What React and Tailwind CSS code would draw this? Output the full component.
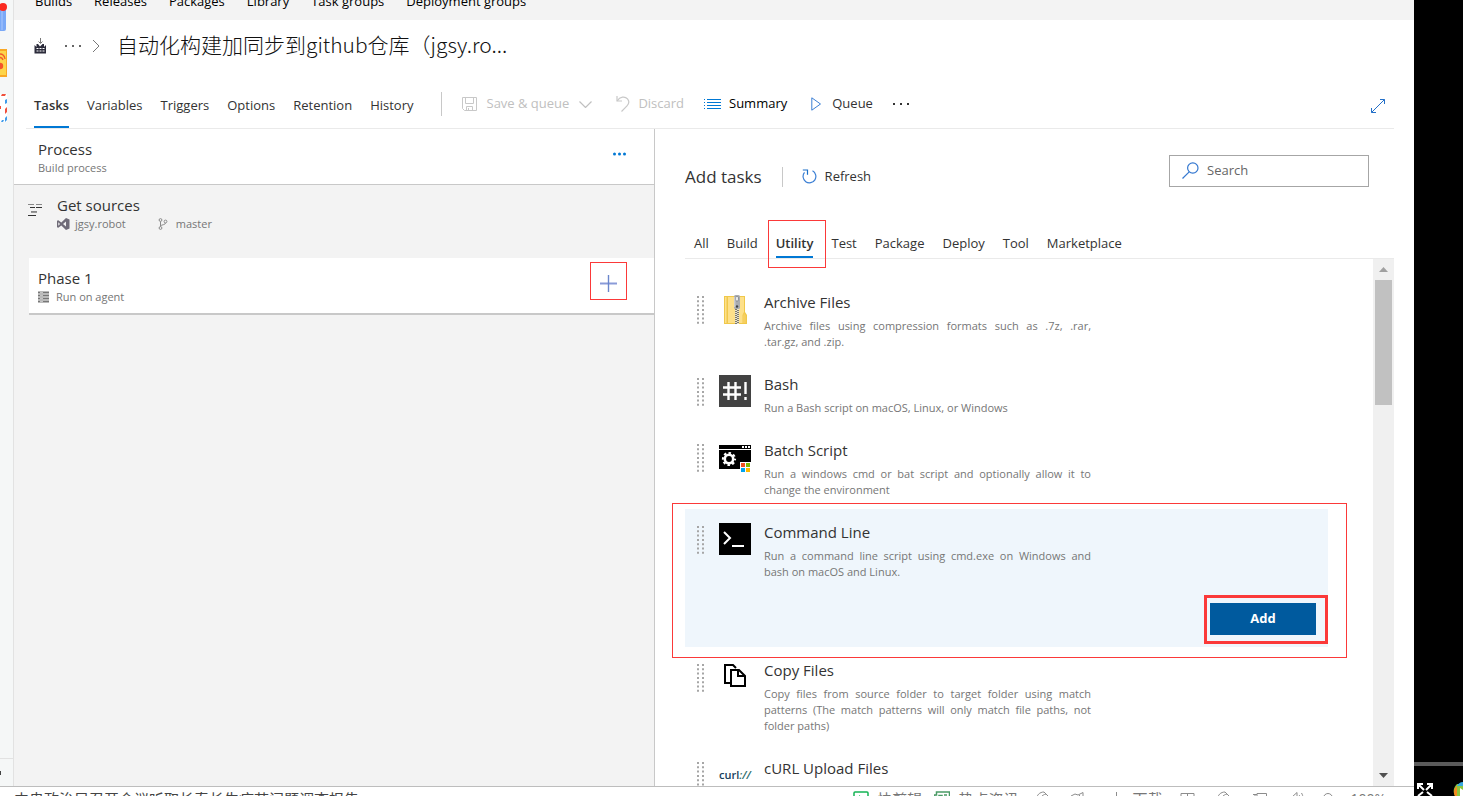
import React from "react";

const NAV = ["Builds", "Releases", "Packages", "Library", "Task groups", "Deployment groups"];
const TABS = ["Tasks", "Variables", "Triggers", "Options", "Retention", "History"];
const CATEGORIES = ["All", "Build", "Utility", "Test", "Package", "Deploy", "Tool", "Marketplace"];

function FactoryIcon() {
  return (
    <svg width="13" height="16" viewBox="0 0 13 16" fill="none">
      <path d="M6.500 0v5M4.500 3.500l2 2 2-2" stroke="#777" />
      <path d="M.5 15.500V7l2 2V6h1.500l2 2.500L8.500 6H10v3l2-2v8.500z" fill="#2b2b3b" />
      <path d="M2.500 10.500h2M5.500 10.500h2M8.500 10.500h2M2.500 13h2M5.500 13h2M8.500 13h2" stroke="#fff" />
    </svg>
  );
}

function Dots({ className }) {
  return (
    <svg width="17" height="4" viewBox="0 0 17 4" className={className} fill="currentColor">
      <rect x="0" y="1" width="2" height="2" />
      <rect x="7" y="1" width="2" height="2" />
      <rect x="14" y="1" width="2" height="2" />
    </svg>
  );
}

function SaveIcon() {
  return (
    <svg width="15" height="14" viewBox="0 0 15 14" fill="none" stroke="#c8c8c8">
      <path d="M.5.5h14v13H2.500l-2-2z" />
      <path d="M3.500.5v6h8v-6M4.500 13.500v-4h6v4M6.500 11v2.500" />
    </svg>
  );
}

function UndoIcon() {
  return (
    <svg width="14" height="16" viewBox="0 0 14 16" fill="none" stroke="#c8c8c8" strokeWidth="1.200">
      <path d="M1 0v5h5" />
      <path d="M1.200 4.800C4 .5 9 0 11.500 2.800c2 2.400 1.400 5-.5 7L5.500 15.500" />
    </svg>
  );
}

function SummaryIcon() {
  return (
    <svg width="17" height="12" viewBox="0 0 17 12" stroke="#0078d4">
      <path d="M3 1.500h14M3 4.500h14M3 7.500h14M3 10.500h14" />
      <path d="M0 1.500h1M0 4.500h1M0 7.500h1M0 10.500h1" />
    </svg>
  );
}

function PlayIcon() {
  return (
    <svg width="11" height="14" viewBox="0 0 11 14" fill="none" stroke="#3b7fd4">
      <path d="M.8.8v12.400L9.500 7z" />
    </svg>
  );
}

function ExpandIcon() {
  return (
    <svg width="16" height="16" viewBox="0 0 16 16" fill="none" stroke="#2470c8">
      <path d="M1.500 14.500l13-13M10 1.500h4.500V6M1.500 10v4.500H6" />
    </svg>
  );
}

function SourcesIcon() {
  return (
    <svg width="15" height="12" viewBox="0 0 15 12">
      <path d="M0 .5h6M8 .5h6M3 7.500h6" stroke="#888" />
      <path d="M2 3.500h5M8 3.500h6M0 11.500h8" stroke="#333" />
      <path d="M3 8.500h6" stroke="#999" />
    </svg>
  );
}

function VsIcon() {
  return (
    <svg width="13" height="12" viewBox="0 0 13 12" fill="#6f6b78" fillRule="evenodd">
      <path d="M9 0l3.500 1.400v9L9 12 4.300 7.500 1.300 9.800 0 9.200V2.800l1.300-.6 3 2.400zM9 3.400L6 6l3 2.600zM1.300 4.200v3.600L3 6z" />
    </svg>
  );
}

function BranchIcon() {
  return (
    <svg width="10" height="12" viewBox="0 0 10 12" fill="none" stroke="#8a8a8a">
      <circle cx="2.500" cy="2" r="1.400" />
      <circle cx="7.500" cy="3.500" r="1.400" />
      <circle cx="2.500" cy="10" r="1.400" />
      <path d="M2.500 3.500v5M7.500 5c0 2-4 1.500-5 3" />
    </svg>
  );
}

function ServerIcon() {
  return (
    <svg width="11" height="12" viewBox="0 0 11 12">
      <path d="M0 1.500h11M0 4.500h11M0 7.500h11M0 10.500h11" stroke="#777" strokeWidth="2" />
      <path d="M2 1.500h3M2 4.500h3M2 7.500h3M2 10.500h3" stroke="#c4c4c4" />
    </svg>
  );
}

function RefreshIcon() {
  return (
    <svg width="15" height="15" viewBox="0 0 15 15" fill="none" stroke="#3b7fd4" strokeWidth="1.200">
      <path d="M10.500 1.800A6.400 6.400 0 1 1 2.500 3.400" />
      <path d="M.8 1h4.700v4.700" stroke="#1a6fc8" />
    </svg>
  );
}

function SearchIcon() {
  return (
    <svg width="17" height="17" viewBox="0 0 17 17" fill="none" stroke="#3478d0" strokeWidth="1.200" className="shrink-0">
      <circle cx="10.800" cy="6" r="5.200" />
      <path d="M7.200 9.800L.5 16.500" />
    </svg>
  );
}

function Grip() {
  return (
    <svg width="7" height="28" viewBox="0 0 7 28" className="mt-[3px] shrink-0" stroke="#a6a6a6" strokeWidth="2">
      <path d="M1 0v28M6 0v28" strokeDasharray="2 2.300" />
    </svg>
  );
}

function ArchiveIcon() {
  return (
    <svg width="32" height="32" viewBox="0 0 32 32">
      <path d="M5 3h21v16l2 3v9H5z" fill="#f0c84a" />
      <path d="M6 4h1.500v26H6zM9 4h16v15l-1.500 3v8H9z" fill="#fde08a" />
      <path d="M25 20l1.800 2.500V30H24v-7.500z" fill="#f6cf60" />
      <rect x="16" y="14" width="4" height="17" fill="#e9e3c8" />
      <path d="M17 14v17M19 15v16" stroke="#555" strokeWidth="1.500" strokeDasharray="1 1" />
      <rect x="15" y="2" width="6" height="14" rx="1.500" fill="#a9acb0" />
      <rect x="16.500" y="3.500" width="3" height="4.500" rx="1.200" fill="#e6e8ea" stroke="#73777b" strokeWidth=".7" />
      <circle cx="18" cy="13.500" r="1.200" fill="#3e4144" />
      <path d="M15.800 4v10" stroke="#d9dbdd" />
    </svg>
  );
}

function BashIcon() {
  return (
    <svg width="32" height="32" viewBox="0 0 32 32" stroke="#fff" strokeWidth="2.400">
      <rect width="32" height="32" fill="#424242" stroke="none" />
      <path d="M9.500 7v18M16.500 7v18M4 12.500h18M4 19.500h18" />
      <path d="M26.500 7v12M26.500 22v3" />
    </svg>
  );
}

function BatchIcon() {
  return (
    <svg width="32" height="32" viewBox="0 0 32 32">
      <path d="M0 4h32v4H0zM0 9h32v19H0z" fill="#000" />
      <path d="M23 5h2v2h-2zM26 5h2v2h-2zM29 5h2v2h-2z" fill="#fff" />
      <circle cx="10" cy="18" r="4.200" fill="none" stroke="#fff" strokeWidth="2.600" />
      <circle cx="10" cy="18" r="6.100" fill="none" stroke="#fff" strokeWidth="2" strokeDasharray="2.500 2.291" strokeDashoffset="1.200" />
      <rect x="21" y="21" width="11" height="11" fill="#fff" />
      <rect x="22" y="22" width="4" height="4" fill="#f25022" />
      <rect x="27" y="22" width="4" height="4" fill="#7fba00" />
      <rect x="22" y="27" width="4" height="4" fill="#00a4ef" />
      <rect x="27" y="27" width="4" height="4" fill="#ffb900" />
    </svg>
  );
}

function CmdIcon() {
  return (
    <svg width="32" height="32" viewBox="0 0 32 32" fill="none" stroke="#fff" strokeWidth="2">
      <rect width="32" height="32" fill="#000" stroke="none" />
      <path d="M5 9l6 6-6 6M13 23h12" />
    </svg>
  );
}

function CopyIcon() {
  return (
    <svg width="32" height="32" viewBox="0 0 32 32" fill="none" stroke="#000" strokeWidth="2">
      <path d="M12 22H6V4h8l3 3" />
      <path d="M12 9h8l6 6v10H12z" fill="#fff" />
      <path d="M19 9v6h7" />
    </svg>
  );
}

function CurlIcon() {
  return (
    <span className="flex h-8 w-8 items-center text-[11px] font-semibold text-[#17405c]">
      curl<span className="text-[#2e6d6b] italic">://</span>
    </span>
  );
}

const TASKS = [
  {
    name: "Archive Files",
    Icon: ArchiveIcon,
    text: "Archive files using compression formats such as .7z, .rar, .tar.gz,\u00a0and .zip.",
  },
  { name: "Bash", Icon: BashIcon, text: "Run a Bash script on macOS, Linux, or Windows" },
  {
    name: "Batch Script",
    Icon: BatchIcon,
    text: "Run a windows cmd or bat script and optionally allow it to change the environment",
  },
  {
    name: "Command Line",
    Icon: CmdIcon,
    text: "Run a command line script using cmd.exe on Windows and bash on macOS and Linux.",
    selected: true,
  },
  {
    name: "Copy Files",
    Icon: CopyIcon,
    text: "Copy files from source folder to target folder using match patterns (The match patterns will only match file paths, not folder paths)",
  },
  { name: "cURL Upload Files", Icon: CurlIcon },
];

function Task({ name, Icon, text, selected }) {
  return (
    <li className={selected ? "relative bg-[#eff6fc]" : "relative"}>
      <div className="flex pt-3.5 pb-[11px] pl-3">
        <Grip />
        <div className="ml-[15px] h-8 w-8 shrink-0">
          <Icon />
        </div>
        <div className="ml-[13px] w-[327px]">
          <h3 className="text-[15px] leading-[18px]">{name}</h3>
          {text && <p className="mt-[7px] text-justify text-[11px] leading-4 text-[#767676]">{text}</p>}
        </div>
      </div>
      {selected && (
        <div className="flex justify-end pt-3 pr-3 pb-3">
          <div className="relative">
            <button className="block h-8 w-[106px] bg-[#005a9e] text-[13px] font-bold text-white">Add</button>
            <span className="pointer-events-none absolute -top-2 -right-3 -bottom-[9px] -left-1.5 border-3 border-[#fb3939]" />
          </div>
        </div>
      )}
      {selected && (
        <span className="pointer-events-none absolute -top-1.5 -right-[19px] -bottom-[11px] -left-[13px] z-10 border border-[#fb3939]" />
      )}
    </li>
  );
}

function SideStrip() {
  return (
    <aside className="flex w-3.5 shrink-0 flex-col border-r border-[#e2e2e2] bg-[#f5f7f7]">
      <svg width="8" height="126" viewBox="0 0 8 126">
        <path d="M0 6h4a2 2 0 0 1 2 2v21a2 2 0 0 1-2 2H0z" fill="#7aa9f7" />
        <path d="M2 10v20" stroke="#a9c8ff" />
        <circle cx="3" cy="7" r="4" fill="#fb2a20" />
        <rect x="-2" y="49" width="9" height="28" fill="#f9a825" />
        <rect x="-2" y="51" width="8" height="24" fill="#fdd54a" />
        <path d="M0 54c3 0 4.500 2 5 5M0 57.500c1.500 0 2.500 1 3 2.500" fill="none" stroke="#f25a2b" strokeWidth="1.300" />
        <circle cx="0" cy="66" r="3.200" fill="#f4552a" />
        <rect x="-2" y="94" width="9" height="28" fill="#fff" />
        <path d="M2 94h4l-1 2H1zM5 109l2-2v5l-2 2zM0 106h1v3H0z" fill="#f0503c" />
        <path d="M5 100l2-1v4l-2 1zM5 118l2-2v4l-2 2zM2 120h2l-1 2H1z" fill="#3f9bea" />
      </svg>
      <div className="mt-auto flex h-7 items-center border-t border-[#e2e2e2]">
        <span className="h-1 w-px bg-[#444]" />
      </div>
    </aside>
  );
}

function StatusIcon({ className, children }) {
  return (
    <svg width="16" height="16" viewBox="0 0 16 16" fill="none" stroke="#8c8c8c" className={className}>
      {children}
    </svg>
  );
}

function StatusBar() {
  return (
    <footer className="h-2.5 shrink-0 overflow-hidden border-t border-[#bdbdbd] bg-white">
      <div className="flex h-6 items-center pr-7 pl-1 text-[15px] leading-6 whitespace-nowrap text-[#777]">
        <span className="w-2.5 text-[#444]">·</span>
        <span className="text-[#444]">中央政治局召开会议听取长春长生疫苗问题调查报告</span>
        <div className="ml-auto flex items-center">
          <StatusIcon>
            <rect x="1" y="1" width="14" height="13" rx="1" stroke="#14b454" strokeWidth="1.500" />
            <path d="M6 4v7l4.500-3.500z" fill="#14b454" stroke="none" />
          </StatusIcon>
          <span className="ml-2">快剪辑</span>
          <StatusIcon className="ml-3">
            <path d="M2.500 1h13v13H.5V4h2zM5 4.500h3v3H5zM10 4h3M10 7.500h3" stroke="#4a9a66" strokeWidth="1.500" />
          </StatusIcon>
          <span className="ml-2">热点资讯</span>
          <StatusIcon className="ml-4">
            <path d="M3 9c-1-5 3-8 7-8l4 4M6 11c-1-4 2-7 6-8M9 6l3 3" />
          </StatusIcon>
          <StatusIcon className="ml-5">
            <path d="M1 5l4-2 3 1 5-2.500v4l-4 6M9 4l2 2M3 7l3 4" />
          </StatusIcon>
          <StatusIcon className="ml-[22px]">
            <path d="M8.500 1v9M5 7l3.500 4L12 7" />
          </StatusIcon>
          <span className="ml-2">下载</span>
          <StatusIcon className="ml-[18px]">
            <path d="M1 2.500h13v11H1zM7.500 2.500v11M1 6.500h13" />
          </StatusIcon>
          <StatusIcon className="ml-5">
            <path d="M2 9c-1-5 3-8 7-8l4 4M5 11c-1-4 2-7 6-8" />
          </StatusIcon>
          <StatusIcon className="ml-5">
            <path d="M5 2.500h9.500v8H5zM1 3.500h4M3 3.500v8" />
          </StatusIcon>
          <StatusIcon className="ml-5">
            <path d="M1 6h3l5-4.500v12L4 10H1zM11 4c2 2 2 5 0 7M13.500 2c2 3 2 8 0 11" />
          </StatusIcon>
          <StatusIcon className="ml-4">
            <circle cx="8" cy="7" r="4.500" />
          </StatusIcon>
          <span className="ml-3.5 text-[14px]">100%</span>
        </div>
      </div>
    </footer>
  );
}

export default function App() {
  return (
    <div className="flex h-screen overflow-hidden bg-white font-['Open_Sans','Noto_Sans_CJK_SC',sans-serif] text-[13px] text-[#333]">
      <div className="flex min-w-0 flex-1 flex-col">
        <div className="flex min-h-0 flex-1">
          <SideStrip />
          <main className="flex min-w-0 flex-1 flex-col">
            <nav className="flex h-5 shrink-0 items-end gap-[22px] overflow-hidden bg-[#f3f3f3] pb-[9px] pl-[21px] leading-5 text-black">
              {NAV.map((n) => (
                <a key={n} href="#" className="whitespace-nowrap">
                  {n}
                </a>
              ))}
            </nav>
            <header className="flex h-[52px] shrink-0 items-center pl-5">
              <FactoryIcon />
              <Dots className="ml-[18px] text-[#666]" />
              <svg width="8" height="14" viewBox="0 0 8 14" fill="none" stroke="#777" className="ml-2.5">
                <path d="M1 1l6 6-6 6" />
              </svg>
              <h1 className="mb-1 ml-[17px] font-['Noto_Sans_CJK_SC',sans-serif] text-[21px] leading-8 font-light whitespace-nowrap text-[#111]">
                自动化构建加同步到github仓库（jgsy.ro...
              </h1>
            </header>
            <div className="mr-5 ml-3 flex h-[57px] shrink-0 items-end border-b border-[#eaeaea] pl-2">
              <div className="flex gap-[18px]">
                {TABS.map((t) => (
                  <a
                    key={t}
                    href="#"
                    className={
                      t === "Tasks"
                        ? "border-b-2 border-[#0078d4] pb-[11px] leading-5 font-semibold"
                        : "border-b-2 border-transparent pb-[11px] leading-5"
                    }
                  >
                    {t}
                  </a>
                ))}
              </div>
              <div className="flex flex-1 items-center self-stretch pt-2 pr-2">
                <span className="ml-[27px] h-6 w-px bg-[#c8c8c8]" />
                <button disabled className="ml-5 flex items-center gap-2.5 text-[#c0c0c0]">
                  <SaveIcon />
                  Save &amp; queue
                  <svg width="13" height="7" viewBox="0 0 13 7" fill="none" stroke="#c0c0c0" strokeWidth="1.200">
                    <path d="M.5.5l6 6 6-6" />
                  </svg>
                </button>
                <button disabled className="ml-6 flex items-center gap-2 text-[#c0c0c0]">
                  <UndoIcon />
                  Discard
                </button>
                <button className="ml-5 flex items-center gap-2 text-black">
                  <SummaryIcon />
                  Summary
                </button>
                <button className="ml-6 flex items-center gap-2.5">
                  <PlayIcon />
                  Queue
                </button>
                <button aria-label="More actions" className="ml-5">
                  <Dots />
                </button>
                <button aria-label="Full screen" className="mt-1 ml-auto">
                  <ExpandIcon />
                </button>
              </div>
            </div>

            <div className="flex min-h-0 flex-1 overflow-hidden">
              <section className="flex w-[641px] shrink-0 flex-col border-r border-[#c8c8c8] bg-[#f3f3f3]">
                <div className="flex items-start justify-between border-b border-[#c8c8c8] bg-white pt-[11px] pr-7 pb-2 pl-6">
                  <div>
                    <h2 className="text-[15px] leading-[18px]">Process</h2>
                    <p className="mt-0.5 text-[11px] leading-4 text-[#767676]">Build process</p>
                  </div>
                  <button aria-label="Process menu" className="flex h-7 items-center">
                    <svg width="13" height="4" viewBox="0 0 13 4" fill="#0078d4">
                      <circle cx="1.500" cy="2" r="1.500" />
                      <circle cx="6.500" cy="2" r="1.500" />
                      <circle cx="11.500" cy="2" r="1.500" />
                    </svg>
                  </button>
                </div>
                <div className="flex h-[73px] gap-3.5 pt-[11px] pl-3.5">
                  <div className="pt-2">
                    <SourcesIcon />
                  </div>
                  <div>
                    <h2 className="text-[15px] leading-[18px]">Get sources</h2>
                    <p className="mt-0.5 flex items-center text-[11px] leading-4 text-[#767676]">
                      <VsIcon />
                      <span className="ml-[5px]">jgsy.robot</span>
                      <span className="ml-8">
                        <BranchIcon />
                      </span>
                      <span className="ml-2">master</span>
                    </p>
                  </div>
                </div>
                <div className="ml-[15px] flex items-start justify-between border-b-2 border-[#c8c8c8] bg-white pr-[27px]">
                  <div className="pt-[11px] pb-2 pl-[9px]">
                    <h2 className="text-[15px] leading-[18px]">Phase 1</h2>
                    <p className="mt-0.5 flex items-center gap-[7px] text-[11px] leading-4 text-[#767676]">
                      <ServerIcon />
                      Run on agent
                    </p>
                  </div>
                  <button
                    aria-label="Add a task to the phase"
                    className="mt-1 flex h-[38px] w-[37px] items-center justify-center border border-[#fb3939] pt-1"
                  >
                    <svg width="17" height="17" viewBox="0 0 17 17" strokeWidth="1.400">
                      <path d="M0 8.500h17" stroke="#8a9bd8" strokeWidth="2" />
                      <path d="M8.500 0v17" stroke="#6a86cc" />
                    </svg>
                  </button>
                </div>
              </section>

              <section className="flex min-w-0 flex-1 flex-col overflow-hidden pl-[30px]">
                <div className="flex h-[83px] shrink-0 items-center pt-3 pr-[45px]">
                  <h2 className="text-[17px] leading-6">Add tasks</h2>
                  <span className="ml-5 h-5 w-px bg-[#c8c8c8]" />
                  <button className="ml-[19px] flex items-center gap-2">
                    <RefreshIcon />
                    Refresh
                  </button>
                  <label className="mb-3 ml-auto flex h-8 w-[200px] items-center gap-2 border border-[#a6a6a6] pl-3">
                    <SearchIcon />
                    <input
                      type="text"
                      aria-label="Search"
                      placeholder="Search"
                      className="w-full min-w-0 outline-none placeholder:text-[#666]"
                    />
                  </label>
                </div>
                <div className="mr-5 flex h-[47px] shrink-0 items-end gap-[18px] border-b border-[#eaeaea] pl-[9px]">
                  {CATEGORIES.map((c) =>
                    c === "Utility" ? (
                      <a key={c} href="#" className="relative border-b-2 border-[#0078d4] pb-[3px] leading-5 font-semibold">
                        {c}
                        <span className="pointer-events-none absolute -top-[13px] -right-[13px] -bottom-3 -left-2 border border-[#fb3939]" />
                      </a>
                    ) : (
                      <a key={c} href="#" className="border-b-2 border-transparent pb-[3px] leading-5">
                        {c}
                      </a>
                    )
                  )}
                </div>
                <div className="flex min-h-0 flex-1">
                  <ul className="min-w-0 flex-1 pt-5 pr-[45px]">
                    {TASKS.map((t) => (
                      <Task key={t.name} {...t} />
                    ))}
                  </ul>
                  <div className="mr-5 flex w-[21px] flex-col items-center bg-[#f0f0f0]">
                    <svg width="9" height="5" viewBox="0 0 9 5" fill="#a0a0a0" className="my-2">
                      <path d="M4.500 0L9 5H0z" />
                    </svg>
                    <div className="h-[125px] w-[17px] bg-[#c1c1c1]" />
                    <svg width="9" height="5" viewBox="0 0 9 5" fill="#505050" className="mt-auto mb-2">
                      <path d="M0 0h9L4.500 5z" />
                    </svg>
                  </div>
                </div>
              </section>
            </div>
          </main>
        </div>
        <StatusBar />
      </div>
      <aside className="flex w-[49px] shrink-0 flex-col justify-end bg-black">
        <div className="h-1 bg-[#5a5a5a]" />
        <svg width="49" height="30" viewBox="0 0 49 30">
          <g stroke="#fff" strokeWidth="2" fill="none">
            <path d="M4 23v-5h5M4 18l6 6M18 23v-5h-5M18 18l-6 6" />
            <path d="M4 30l5-4M18 30l-5-4" />
          </g>
          <path d="M43 18c-4 4-4 8-2 12h8V18z" fill="#8cc63f" />
          <path d="M43 20c1-2 3-4 6-4v4z" fill="#39a9e0" />
          <path d="M43 20c-3 2-4 7-2 10h2z" fill="#f58a1f" />
          <path d="M46 22v8h3v-6z" fill="#fff" />
        </svg>
      </aside>
    </div>
  );
}
